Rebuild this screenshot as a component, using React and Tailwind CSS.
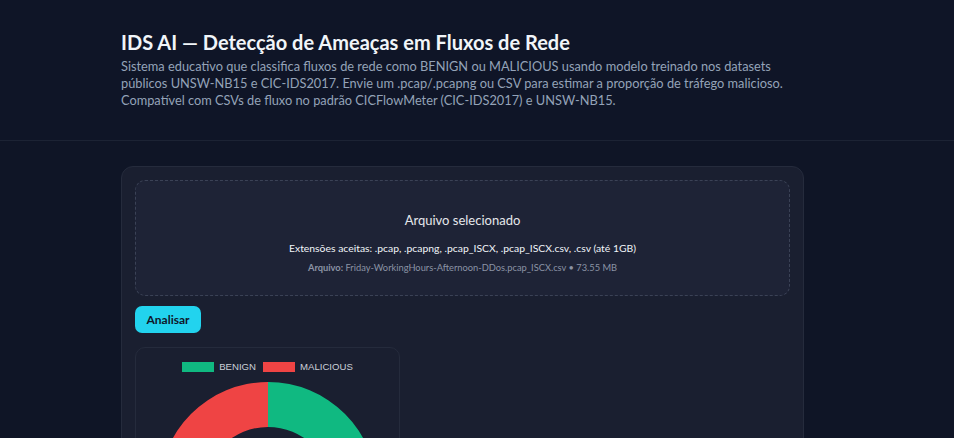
import React from "react";

function Donut() {
  const cx = 132, cy = 109, R = 109, r = 64;
  const green = `M ${cx} ${cy - R} A ${R} ${R} 0 0 1 ${cx} ${cy + R} L ${cx} ${cy + r} A ${r} ${r} 0 0 0 ${cx} ${cy - r} Z`;
  const red = `M ${cx} ${cy + R} A ${R} ${R} 0 0 1 ${cx} ${cy - R} L ${cx} ${cy - r} A ${r} ${r} 0 0 0 ${cx} ${cy + r} Z`;
  return (
    <svg width="265" height="220" viewBox="0 0 265 220" className="block">
      <path d={green} fill="#10b981" />
      <path d={red} fill="#ef4444" />
    </svg>
  );
}

export default function App() {
  return (
    <div
      className="min-h-screen bg-[#0f1526] text-[#e5e7eb]"
      style={{ fontFamily: 'Lato, "Open Sans", sans-serif' }}
    >
      <header className="border-b border-[#1c2334] bg-[#0f1527] pl-[121px] pt-[29px] pb-[31px]">
        <h1 className="text-[20px] font-bold leading-[26px] text-[#f1f5f9]">
          IDS AI — Detecção de Ameaças em Fluxos de Rede
        </h1>
        <p className="mt-[3px] w-[683px] text-[12.8px] leading-[17px] text-[#94a3b8]">
          Sistema educativo que classifica fluxos de rede como BENIGN ou MALICIOUS usando modelo treinado nos datasets
          públicos UNSW-NB15 e CIC-IDS2017. Envie um .pcap/.pcapng ou CSV para estimar a proporção de tráfego malicioso.
          Compatível com CSVs de fluxo no padrão CICFlowMeter (CIC-IDS2017) e UNSW-NB15.
        </p>
      </header>
      <main className="pl-[121px] pt-[25px]">
        <div className="w-[683px] rounded-[12px] border border-[#252b3c] bg-[#1a1f30] p-[13px]">
          <div className="flex h-[116px] flex-col items-center rounded-[10px] border border-dashed border-[#3b4256] bg-[#1e2336]">
            <div className="mt-[30px] text-[13px] leading-[18px] text-[#e5e7eb]">Arquivo selecionado</div>
            <div className="mt-[12px] text-[10.4px] leading-[15px] text-[#f1f5f9]">
              Extensões aceitas: .pcap, .pcapng, .pcap_ISCX, .pcap_ISCX.csv, .csv (até 1GB)
            </div>
            <div className="mt-[6px] text-[9.3px] leading-[12px] text-[#8b93a5]">
              <span className="font-bold">Arquivo:</span> Friday-WorkingHours-Afternoon-DDos.pcap_ISCX.csv • 73.55 MB
            </div>
          </div>
          <button className="mt-[10px] flex h-[27px] w-[66px] items-center justify-center rounded-[7px] bg-[#22d3ee] text-[12px] font-bold text-[#0f172a]">
            Analisar
          </button>
          <div className="mt-[14px] h-[120px] w-[265px] overflow-hidden rounded-[10px] border border-[#252b3c] bg-[#1a1f30]">
            <div
              className="mt-[12px] flex h-[14px] items-center justify-center gap-[5px] text-[9.6px] text-[#cbd0d8]"
              style={{ fontFamily: '"Liberation Sans", Arial, sans-serif' }}
            >
              <span className="h-[10px] w-[32px] bg-[#10b981]" />
              <span>BENIGN</span>
              <span className="ml-[2px] h-[10px] w-[32px] bg-[#ef4444]" />
              <span>MALICIOUS</span>
            </div>
            <div className="mt-[8px]">
              <Donut />
            </div>
          </div>
        </div>
      </main>
    </div>
  );
}
